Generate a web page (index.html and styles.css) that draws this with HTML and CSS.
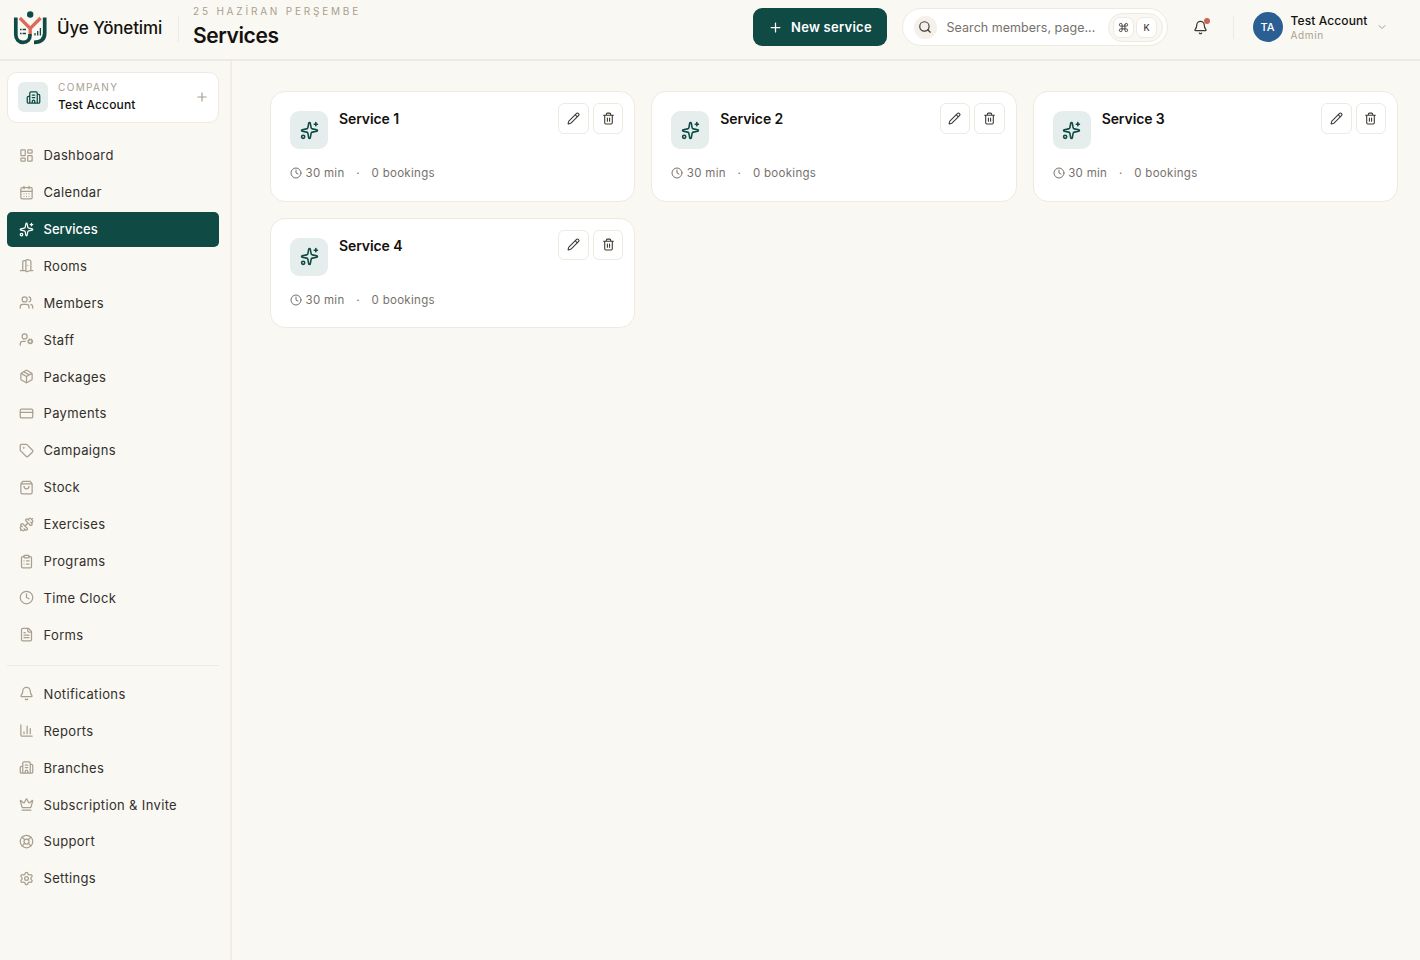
FILE: index.html
```html
<!DOCTYPE html>
<html lang="tr">
  <head>
    <meta charset="utf-8" />
    <title>Services - Üye Yönetimi</title>
    <meta name="viewport" content="width=device-width, initial-scale=1" />
    <link rel="stylesheet" href="styles.css">
  </head>
  <body>
    <!-- icon sprite -->
    <svg class="sprite" aria-hidden="true">
      <symbol id="i-dashboard" viewBox="0 0 24 24"><rect width="7" height="9" x="3" y="3" rx="1"/><rect width="7" height="5" x="14" y="3" rx="1"/><rect width="7" height="9" x="14" y="12" rx="1"/><rect width="7" height="5" x="3" y="16" rx="1"/></symbol>
      <symbol id="i-calendar" viewBox="0 0 24 24"><path d="M8 2v4M16 2v4M3 10h18M8 14h.01M12 14h.01M16 14h.01M8 18h.01M12 18h.01M16 18h.01"/><rect width="18" height="18" x="3" y="4" rx="2"/></symbol>
      <symbol id="i-sparkles" viewBox="0 0 24 24"><path d="M11.017 2.814a1 1 0 0 1 1.966 0l1.051 5.558a2 2 0 0 0 1.594 1.594l5.558 1.051a1 1 0 0 1 0 1.966l-5.558 1.051a2 2 0 0 0-1.594 1.594l-1.051 5.558a1 1 0 0 1-1.966 0l-1.051-5.558a2 2 0 0 0-1.594-1.594l-5.558-1.051a1 1 0 0 1 0-1.966l5.558-1.051a2 2 0 0 0 1.594-1.594zM20 2v4M22 4h-4"/><circle cx="4" cy="20" r="2"/></symbol>
      <symbol id="i-door" viewBox="0 0 24 24"><path d="M11 20H2M11 4.562v16.157a1 1 0 0 0 1.242.97L19 20V5.562a2 2 0 0 0-1.515-1.94l-4-1A2 2 0 0 0 11 4.561zM11 4H8a2 2 0 0 0-2 2v14M14 12h.01M22 20h-3"/></symbol>
      <symbol id="i-users" viewBox="0 0 24 24"><path d="M16 21v-2a4 4 0 0 0-4-4H6a4 4 0 0 0-4 4v2M16 3.128a4 4 0 0 1 0 7.744M22 21v-2a4 4 0 0 0-3-3.870"/><circle cx="9" cy="7" r="4"/></symbol>
      <symbol id="i-staff" viewBox="0 0 24 24"><path d="M10 15H6a4 4 0 0 0-4 4v2M14.305 16.530l.923-.382M15.228 13.852l-.923-.383M16.852 12.228l-.383-.923M16.852 17.772l-.383.924M19.148 12.228l.383-.923M19.530 18.696l-.382-.924M20.772 13.852l.924-.383M20.772 16.148l.924.383"/><circle cx="18" cy="15" r="3"/><circle cx="9" cy="7" r="4"/></symbol>
      <symbol id="i-package" viewBox="0 0 24 24"><path d="M11 21.730a2 2 0 0 0 2 0l7-4A2 2 0 0 0 21 16V8a2 2 0 0 0-1-1.730l-7-4a2 2 0 0 0-2 0l-7 4A2 2 0 0 0 3 8v8a2 2 0 0 0 1 1.730zM12 22V12M3.290 7 12 12l8.710-5M7.500 4.270l9 5.150"/></symbol>
      <symbol id="i-card" viewBox="0 0 24 24"><rect width="20" height="14" x="2" y="5" rx="2"/><path d="M2 10h20"/></symbol>
      <symbol id="i-tag" viewBox="0 0 24 24"><path d="M12.586 2.586A2 2 0 0 0 11.172 2H4a2 2 0 0 0-2 2v7.172a2 2 0 0 0 .586 1.414l8.704 8.704a2.426 2.426 0 0 0 3.420 0l6.580-6.580a2.426 2.426 0 0 0 0-3.420z"/><circle cx="7.500" cy="7.500" r=".5" fill="currentColor"/></symbol>
      <symbol id="i-bag" viewBox="0 0 24 24"><path d="M6 2 3 6v14a2 2 0 0 0 2 2h14a2 2 0 0 0 2-2V6l-3-4ZM3 6h18M16 10a4 4 0 0 1-8 0"/></symbol>
      <symbol id="i-dumbbell" viewBox="0 0 24 24"><path d="M17.596 12.768a2 2 0 1 0 2.829-2.829l-1.768-1.767a2 2 0 0 0 2.828-2.829l-2.828-2.828a2 2 0 0 0-2.829 2.828l-1.767-1.768a2 2 0 1 0-2.829 2.829zM2.500 21.500l1.400-1.400M20.100 3.900l1.400-1.400M5.343 21.485a2 2 0 1 0 2.829-2.828l1.767 1.768a2 2 0 1 0 2.829-2.829l-6.364-6.364a2 2 0 1 0-2.829 2.829l1.768 1.767a2 2 0 0 0-2.828 2.829zM9.600 14.400l4.800-4.800"/></symbol>
      <symbol id="i-clipboard" viewBox="0 0 24 24"><rect width="8" height="4" x="8" y="2" rx="1"/><path d="M16 4h2a2 2 0 0 1 2 2v14a2 2 0 0 1-2 2H6a2 2 0 0 1-2-2V6a2 2 0 0 1 2-2h2M12 11h4M12 16h4M8 11h.01M8 16h.01"/></symbol>
      <symbol id="i-clock" viewBox="0 0 24 24"><circle cx="12" cy="12" r="10"/><path d="M12 6v6l4 2"/></symbol>
      <symbol id="i-file" viewBox="0 0 24 24"><path d="M15 2H6a2 2 0 0 0-2 2v16a2 2 0 0 0 2 2h12a2 2 0 0 0 2-2V7ZM14 2v4a2 2 0 0 0 2 2h4M10 9H8M16 13H8M16 17H8"/></symbol>
      <symbol id="i-bell" viewBox="0 0 24 24"><path d="M10.268 21a2 2 0 0 0 3.464 0M3.262 15.326A1 1 0 0 0 4 17h16a1 1 0 0 0 .740-1.673C19.410 13.956 18 12.499 18 8A6 6 0 0 0 6 8c0 4.499-1.411 5.956-2.738 7.326"/></symbol>
      <symbol id="i-chart" viewBox="0 0 24 24"><path d="M3 3v16a2 2 0 0 0 2 2h16M18 17V9M13 17V5M8 17v-3"/></symbol>
      <symbol id="i-building" viewBox="0 0 24 24"><path d="M10 12h4M10 8h4M14 21v-3a2 2 0 0 0-4 0v3M6 10H4a2 2 0 0 0-2 2v7a2 2 0 0 0 2 2h16a2 2 0 0 0 2-2V9a2 2 0 0 0-2-2h-2M6 21V5a2 2 0 0 1 2-2h8a2 2 0 0 1 2 2v16"/></symbol>
      <symbol id="i-crown" viewBox="0 0 24 24"><path d="M11.562 3.266a.5.5 0 0 1 .876 0L15.390 8.870a1 1 0 0 0 1.516.294L21.183 5.500a.5.5 0 0 1 .798.519l-2.834 10.246a1 1 0 0 1-.956.734H5.810a1 1 0 0 1-.957-.734L2.020 6.020a.5.5 0 0 1 .798-.519l4.276 3.664a1 1 0 0 0 1.516-.294zM5 21h14"/></symbol>
      <symbol id="i-lifebuoy" viewBox="0 0 24 24"><circle cx="12" cy="12" r="10"/><circle cx="12" cy="12" r="4"/><path d="m4.930 4.930 4.240 4.240M14.830 9.170l4.240-4.240M14.830 14.830l4.240 4.240M9.170 14.830l-4.240 4.240"/></symbol>
      <symbol id="i-settings" viewBox="0 0 24 24"><path d="M9.671 4.136a2.340 2.340 0 0 1 4.659 0 2.340 2.340 0 0 0 3.319 1.915 2.340 2.340 0 0 1 2.330 4.033 2.340 2.340 0 0 0 0 3.831 2.340 2.340 0 0 1-2.330 4.033 2.340 2.340 0 0 0-3.319 1.915 2.340 2.340 0 0 1-4.659 0 2.340 2.340 0 0 0-3.320-1.915 2.340 2.340 0 0 1-2.330-4.033 2.340 2.340 0 0 0 0-3.831A2.340 2.340 0 0 1 6.350 6.051a2.340 2.340 0 0 0 3.319-1.915"/><circle cx="12" cy="12" r="3"/></symbol>
      <symbol id="i-plus" viewBox="0 0 24 24"><path d="M5 12h14M12 5v14"/></symbol>
      <symbol id="i-search" viewBox="0 0 24 24"><circle cx="11" cy="11" r="8"/><path d="m21 21-4.340-4.340"/></symbol>
      <symbol id="i-command" viewBox="0 0 24 24"><path d="M15 6v12a3 3 0 1 0 3-3H6a3 3 0 1 0 3 3V6a3 3 0 1 0-3 3h12a3 3 0 1 0-3-3"/></symbol>
      <symbol id="i-chevron" viewBox="0 0 24 24"><path d="m6 9 6 6 6-6"/></symbol>
      <symbol id="i-pencil" viewBox="0 0 24 24"><path d="M21.174 6.812a1 1 0 0 0-3.986-3.987L3.842 16.174a2 2 0 0 0-.5.830l-1.321 4.352a.5.5 0 0 0 .623.622l4.353-1.320a2 2 0 0 0 .830-.497zM15 5l4 4"/></symbol>
      <symbol id="i-trash" viewBox="0 0 24 24"><path d="M3 6h18M19 6v14a2 2 0 0 1-2 2H7a2 2 0 0 1-2-2V6M8 6V4a2 2 0 0 1 2-2h4a2 2 0 0 1 2 2v2M10 11v6M14 11v6"/></symbol>
    </svg>

    <header class="topbar">
      <div class="brand">
        <svg class="logo" viewBox="0 0 34 34">
          <circle class="logo-dot" cx="17.200" cy="3.500" r="3.200"/>
          <path class="logo-y" d="M6.800 7 17.200 17.500 27.600 7M17.200 17V23"/>
          <path class="logo-u" d="M2.800 6.500V23.500c0 4.800 3 7.800 7.200 7.800s7-2.500 7-6.800V23"/>
          <path class="logo-u" d="M31.700 6.500V22c0 6-3.700 9.300-10.700 9.300"/>
          <path class="logo-detail" d="M7 18.500h1.600M9.600 18.500h3.400M7 22.500h1.600M9.600 22.500h3.400M22 24.500v-2.500M24.700 24.500v-4.500M27.400 24.500v-7.500"/>
        </svg>
        <span class="brand-name">Üye Yönetimi</span>
      </div>
      <div class="page-head">
        <div class="date">25 HAZİRAN PERŞEMBE</div>
        <h1>Services</h1>
      </div>
      <button class="btn-new"><svg class="icon"><use href="#i-plus"/></svg><span>New service</span></button>
      <div class="search">
        <span class="search-icon"><svg class="icon"><use href="#i-search"/></svg></span>
        <span class="search-text">Search members, page...</span>
        <span class="keys"><kbd><svg class="icon"><use href="#i-command"/></svg></kbd><kbd>K</kbd></span>
      </div>
      <div class="bell"><svg class="icon"><use href="#i-bell"/></svg><span class="bell-dot"></span></div>
      <div class="user">
        <span class="avatar">TA</span>
        <div>
          <div class="user-name">Test Account</div>
          <div class="user-role">Admin</div>
        </div>
        <svg class="icon"><use href="#i-chevron"/></svg>
      </div>
    </header>

    <div class="layout">
      <aside class="sidebar">
        <div class="company">
          <span class="company-icon"><svg class="icon"><use href="#i-building"/></svg></span>
          <div class="company-text">
            <div class="company-label">COMPANY</div>
            <div class="company-name">Test Account</div>
          </div>
          <svg class="icon company-add"><use href="#i-plus"/></svg>
        </div>
        <nav class="nav">
          <a class="nav-item"><svg class="icon"><use href="#i-dashboard"/></svg>Dashboard</a>
          <a class="nav-item"><svg class="icon"><use href="#i-calendar"/></svg>Calendar</a>
          <a class="nav-item active"><svg class="icon"><use href="#i-sparkles"/></svg>Services</a>
          <a class="nav-item"><svg class="icon"><use href="#i-door"/></svg>Rooms</a>
          <a class="nav-item"><svg class="icon"><use href="#i-users"/></svg>Members</a>
          <a class="nav-item"><svg class="icon"><use href="#i-staff"/></svg>Staff</a>
          <a class="nav-item"><svg class="icon"><use href="#i-package"/></svg>Packages</a>
          <a class="nav-item"><svg class="icon"><use href="#i-card"/></svg>Payments</a>
          <a class="nav-item"><svg class="icon"><use href="#i-tag"/></svg>Campaigns</a>
          <a class="nav-item"><svg class="icon"><use href="#i-bag"/></svg>Stock</a>
          <a class="nav-item"><svg class="icon"><use href="#i-dumbbell"/></svg>Exercises</a>
          <a class="nav-item"><svg class="icon"><use href="#i-clipboard"/></svg>Programs</a>
          <a class="nav-item"><svg class="icon"><use href="#i-clock"/></svg>Time Clock</a>
          <a class="nav-item"><svg class="icon"><use href="#i-file"/></svg>Forms</a>
        </nav>
        <nav class="nav nav-secondary">
          <a class="nav-item"><svg class="icon"><use href="#i-bell"/></svg>Notifications</a>
          <a class="nav-item"><svg class="icon"><use href="#i-chart"/></svg>Reports</a>
          <a class="nav-item"><svg class="icon"><use href="#i-building"/></svg>Branches</a>
          <a class="nav-item"><svg class="icon"><use href="#i-crown"/></svg>Subscription &amp; Invite</a>
          <a class="nav-item"><svg class="icon"><use href="#i-lifebuoy"/></svg>Support</a>
          <a class="nav-item"><svg class="icon"><use href="#i-settings"/></svg>Settings</a>
        </nav>
      </aside>

      <main class="services">
        <article class="card">
          <div class="card-top">
            <span class="card-icon"><svg class="icon"><use href="#i-sparkles"/></svg></span>
            <h2>Service 1</h2>
            <div class="actions">
              <button><svg class="icon"><use href="#i-pencil"/></svg></button>
              <button><svg class="icon"><use href="#i-trash"/></svg></button>
            </div>
          </div>
          <div class="meta"><svg class="icon"><use href="#i-clock"/></svg><span>30 min</span><span class="sep">·</span><span>0 bookings</span></div>
        </article>
        <article class="card">
          <div class="card-top">
            <span class="card-icon"><svg class="icon"><use href="#i-sparkles"/></svg></span>
            <h2>Service 2</h2>
            <div class="actions">
              <button><svg class="icon"><use href="#i-pencil"/></svg></button>
              <button><svg class="icon"><use href="#i-trash"/></svg></button>
            </div>
          </div>
          <div class="meta"><svg class="icon"><use href="#i-clock"/></svg><span>30 min</span><span class="sep">·</span><span>0 bookings</span></div>
        </article>
        <article class="card">
          <div class="card-top">
            <span class="card-icon"><svg class="icon"><use href="#i-sparkles"/></svg></span>
            <h2>Service 3</h2>
            <div class="actions">
              <button><svg class="icon"><use href="#i-pencil"/></svg></button>
              <button><svg class="icon"><use href="#i-trash"/></svg></button>
            </div>
          </div>
          <div class="meta"><svg class="icon"><use href="#i-clock"/></svg><span>30 min</span><span class="sep">·</span><span>0 bookings</span></div>
        </article>
        <article class="card">
          <div class="card-top">
            <span class="card-icon"><svg class="icon"><use href="#i-sparkles"/></svg></span>
            <h2>Service 4</h2>
            <div class="actions">
              <button><svg class="icon"><use href="#i-pencil"/></svg></button>
              <button><svg class="icon"><use href="#i-trash"/></svg></button>
            </div>
          </div>
          <div class="meta"><svg class="icon"><use href="#i-clock"/></svg><span>30 min</span><span class="sep">·</span><span>0 bookings</span></div>
        </article>
      </main>
    </div>
  </body>
</html>
```
FILE: styles.css
```css
:root {
  --bg: #faf8f3;
  --line: #efeae0;
  --green: #0f4a44;
  --mint: #e6eeed;
  --text: #14110f;
  --muted: #a89f8f;
}
* {
  box-sizing: border-box;
}
body {
  margin: 0;
  height: 960px;
  overflow: hidden;
  display: flex;
  flex-direction: column;
  background: var(--bg);
  color: var(--text);
  font-family: Inter, sans-serif;
  font-size: 13px;
}
button {
  font: inherit;
  padding: 0;
}
.sprite {
  display: none;
}
.icon {
  width: 15px;
  height: 15px;
  flex: none;
  fill: none;
  stroke: currentColor;
  stroke-width: 2;
  stroke-linecap: round;
  stroke-linejoin: round;
}

/* top bar */
.topbar {
  height: 61px;
  flex: none;
  display: flex;
  align-items: center;
  padding: 0 32.5px 5px 13px;
  border-bottom: 2px solid var(--line);
}
.brand {
  display: flex;
  align-items: center;
  gap: 10px;
  width: 166px;
  height: 27px;
  margin-top: 2px;
  border-right: 1px solid var(--line);
}
.logo {
  width: 34px;
  height: 34px;
  flex: none;
  fill: none;
}
.logo-dot {
  fill: var(--green);
}
.logo-y {
  stroke: #dd6b58;
  stroke-width: 3.3;
}
.logo-u {
  stroke: var(--green);
  stroke-width: 3.7;
}
.logo-detail {
  stroke: var(--green);
  stroke-width: 1.3;
}
.brand-name {
  font-size: 17px;
  font-weight: 500;
  letter-spacing: -0.15px;
  white-space: nowrap;
}
.page-head {
  flex: 1;
  padding-left: 14px;
}
.date {
  color: var(--muted);
  font-size: 10px;
  line-height: 12px;
  letter-spacing: 2.8px;
}
.page-head h1 {
  margin: 6px 0 0;
  font-size: 21px;
  line-height: 26px;
  font-weight: 600;
  letter-spacing: -0.4px;
}
.btn-new {
  display: flex;
  align-items: center;
  gap: 8.5px;
  width: 134px;
  height: 38px;
  padding-left: 15px;
  border: 0;
  border-radius: 9px;
  background: var(--green);
  color: #fff;
  font-weight: 600;
  letter-spacing: 0.25px;
}
.search {
  display: flex;
  align-items: center;
  width: 266px;
  height: 38px;
  margin-left: 15px;
  padding: 0 4px 0 11px;
  border: 1px solid var(--line);
  border-radius: 19px;
  background: #fff;
}
.search-icon {
  display: flex;
  align-items: center;
  justify-content: center;
  width: 23px;
  height: 23px;
  border-radius: 50%;
  background: #f5f0e9;
  color: #3d3935;
}
.search-icon .icon {
  width: 14px;
  height: 14px;
}
.search-text {
  flex: 1;
  padding-left: 10px;
  color: #77716c;
  font-size: 12.5px;
  letter-spacing: 0.03px;
  white-space: nowrap;
}
.keys {
  display: flex;
  align-items: center;
  justify-content: center;
  gap: 2px;
  width: 55px;
  height: 29px;
  border: 1px solid var(--line);
  border-radius: 15px;
  background: var(--bg);
}
kbd {
  display: flex;
  align-items: center;
  justify-content: center;
  width: 21px;
  height: 21px;
  border: 1px solid var(--line);
  border-radius: 7px;
  background: #fff;
  color: #3d3935;
  font-family: inherit;
  font-size: 9px;
  font-weight: 500;
}
kbd .icon {
  width: 11px;
  height: 11px;
}
.bell {
  position: relative;
  display: flex;
  margin-left: 25px;
  color: #3d3935;
}
.bell-dot {
  position: absolute;
  top: -2px;
  right: -2px;
  width: 6px;
  height: 6px;
  border-radius: 50%;
  background: #c96552;
}
.user {
  display: flex;
  align-items: center;
  margin-left: 25px;
  padding-left: 20px;
  gap: 8px;
  background: linear-gradient(var(--line), var(--line)) left center / 1px 23px no-repeat;
}
.avatar {
  display: flex;
  align-items: center;
  justify-content: center;
  width: 30px;
  height: 30px;
  border-radius: 50%;
  background: #2b5e92;
  color: #fff;
  font-size: 11px;
  font-weight: 500;
}
.user-name {
  font-size: 12px;
  line-height: 15px;
  font-weight: 500;
  letter-spacing: 0.1px;
}
.user-role {
  color: var(--muted);
  font-size: 10px;
  line-height: 14px;
  letter-spacing: 0.6px;
}
.user .icon {
  width: 12px;
  height: 12px;
  color: var(--muted);
}

/* sidebar */
.layout {
  flex: 1;
  display: flex;
}
.sidebar {
  width: 232px;
  flex: none;
  padding: 11px 11px 0 7px;
  border-right: 2px solid #f2ece5;
}
.company {
  display: flex;
  align-items: center;
  height: 51px;
  padding: 0 9px 1px 10px;
  border: 1px solid var(--line);
  border-radius: 10px;
  background: #fff;
}
.company-icon {
  display: flex;
  align-items: center;
  justify-content: center;
  width: 30px;
  height: 30px;
  border-radius: 6px;
  background: var(--mint);
  color: var(--green);
}
.company-text {
  flex: 1;
  padding-left: 10px;
}
.company-label {
  color: var(--muted);
  font-size: 10px;
  line-height: 13px;
  letter-spacing: 1.35px;
}
.company-name {
  margin-top: 3px;
  font-size: 12px;
  line-height: 16px;
  font-weight: 500;
  letter-spacing: 0.15px;
}
.company-add {
  width: 14px;
  height: 14px;
  color: var(--muted);
}
.nav {
  display: flex;
  flex-direction: column;
  gap: 1.9px;
  margin-top: 15px;
}
.nav-item {
  display: flex;
  align-items: center;
  gap: 9.5px;
  height: 35px;
  padding: 0 0 0.5px 12px;
  border-radius: 5px;
  color: #332f2c;
  letter-spacing: 0.35px;
}
.nav-item .icon {
  color: var(--muted);
}
.nav-item.active {
  background: var(--green);
  color: #fff;
  font-weight: 500;
  letter-spacing: 0;
}
.nav-item.active .icon {
  color: #fff;
}
.nav-secondary {
  margin-top: 12.5px;
  padding-top: 10.5px;
  border-top: 1px solid var(--line);
}

/* service cards */
.services {
  flex: 1;
  display: grid;
  grid-template-columns: repeat(3, 1fr);
  grid-auto-rows: 110.5px;
  gap: 16px;
  padding: 30px 22px 0 38px;
}
.card {
  padding: 11px 11px 0 19px;
  border: 1px solid var(--line);
  border-radius: 15px;
  background: #fff;
}
.card-top {
  display: flex;
  align-items: flex-start;
}
.card-icon {
  display: flex;
  align-items: center;
  justify-content: center;
  width: 38px;
  height: 38px;
  margin-top: 8px;
  border-radius: 9px;
  background: var(--mint);
  color: var(--green);
}
.card-icon .icon {
  width: 19px;
  height: 19px;
}
.card h2 {
  flex: 1;
  margin: 7px 0 0 11px;
  font-size: 14px;
  line-height: 18px;
  font-weight: 600;
  letter-spacing: -0.1px;
}
.actions {
  display: flex;
  gap: 4px;
}
.actions button {
  display: flex;
  align-items: center;
  justify-content: center;
  width: 30.5px;
  height: 30.5px;
  border: 1px solid var(--line);
  border-radius: 6px;
  background: #fff;
  color: #3d3935;
}
.actions .icon {
  width: 13px;
  height: 13px;
}
.meta {
  display: flex;
  align-items: center;
  margin-top: 16px;
  color: #77716c;
  font-size: 11.5px;
  line-height: 16px;
  letter-spacing: 0.3px;
}
.meta .icon {
  width: 12px;
  height: 12px;
  margin-right: 3.5px;
}
.meta .sep {
  width: 27px;
  text-align: center;
}
```
